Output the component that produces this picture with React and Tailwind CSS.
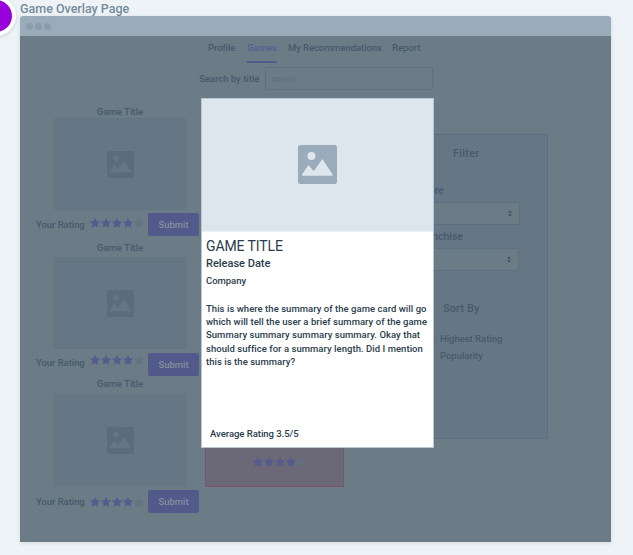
function PictureIcon({ className, hole }) {
  return (
    <svg viewBox="0 0 39 39" className={className}>
      <rect width="39" height="39" rx="2.5" fill="currentColor" />
      <g fill={hole}>
        <circle cx="13.4" cy="11" r="4" />
        <path d="M4 30.8V29.5L10.5 20L15.7 26.2L24.4 14L34.6 29.5V30.8Z" />
      </g>
    </svg>
  );
}

function Star({ className }) {
  return (
    <svg viewBox="0 0 20 20" className={`h-2.5 w-2.5 ${className}`}>
      <path
        fill="currentColor"
        stroke="currentColor"
        strokeWidth="1"
        strokeLinejoin="round"
        d="M10 1L12.8 6.8L19.2 7.6L14.5 12L15.7 18.6L10 15.4L4.3 18.6L5.5 12L.8 7.6L7.2 6.8Z"
      />
    </svg>
  );
}

function Stars({ last = "text-[#637482]" }) {
  return (
    <div className="flex gap-px">
      {[1, 2, 3, 4].map((n) => (
        <Star key={n} className="text-[#555b8f]" />
      ))}
      <Star className={last} />
    </div>
  );
}

function GameItem({ className, picture, row, label, stars }) {
  return (
    <div className={className}>
      <div className="h-3 pl-[61px] text-[9.5px] leading-3 tracking-[0px]">Game Title</div>
      <div className={`ml-[18px] flex h-[92px] w-[132px] items-center justify-center border border-[#657682] bg-[#657785] ${picture}`}>
        <PictureIcon className="h-[27px] w-[27px] text-[#5b6d7b]" hole="#657785" />
      </div>
      <div className={`flex h-[23px] items-center ${row}`}>
        <span className={`w-[54px] shrink-0 whitespace-nowrap text-[9.5px] leading-3 tracking-[-0.05px] ${label}`}>Your Rating</span>
        <div className={stars}>
          <Stars />
        </div>
        <button className="ml-1 h-[23px] w-[51px] shrink-0 rounded-[2px] bg-[#53598b] text-[9.5px] leading-3 tracking-[0px] text-[#84909d]">
          Submit
        </button>
      </div>
    </div>
  );
}

function SelectBox({ className }) {
  return (
    <div className={`flex h-[23px] items-center justify-end rounded-[1px] border border-[#5d7080] bg-[#6b7c87] pr-[7px] ${className}`}>
      <svg viewBox="0 0 4 7" className="h-[7px] w-1 text-[#3f5263]">
        <path fill="currentColor" d="M2 .3L3.8 2.7H.2ZM2 6.7L.2 4.3H3.8Z" />
      </svg>
    </div>
  );
}

function FilterPanel() {
  return (
    <aside className="ml-[199px] mt-[30px] h-[305px] w-[143px] border border-[#5b6e7e] bg-[#657785] pl-2">
      <div className="mt-[13px] pl-[39px] text-[11px] leading-3 tracking-[0.2px]">Filter</div>
      <div className="mt-[25px] flex w-[30px] justify-end text-[10.5px] leading-3 tracking-[0px]">Genre</div>
      <SelectBox className="mt-[5px] w-[106px]" />
      <div className="mt-[6px] flex w-[49px] justify-end text-[10.5px] leading-3 tracking-[0px]">Franchise</div>
      <SelectBox className="mt-[5px] w-[105px]" />
      <div className="mt-8 pl-[29px] text-[11px] leading-3 tracking-[0.1px]">Sort By</div>
      <label className="mt-[18px] flex items-center gap-1 pl-3 text-[9.5px] leading-3 tracking-[-0.03px]">
        <i className="h-2.5 w-2.5 shrink-0 rounded-full border border-[#5f7181]" />
        <span className="whitespace-nowrap">Highest Rating</span>
      </label>
      <label className="mt-[5px] flex items-center gap-1 pl-3 text-[9.5px] leading-3 tracking-[-0.03px]">
        <i className="h-2.5 w-2.5 shrink-0 rounded-full border border-[#5f7181]" />
        <span>Popularity</span>
      </label>
    </aside>
  );
}

function GameModal() {
  return (
    <section className="absolute left-[181px] top-[62px] h-[350px] w-[233px] border border-[#b9c7d2] bg-white text-[#2a3d4c]">
      <div className="flex h-[133px] items-center justify-center border-b border-[#eef2f6] bg-[#dee6ed] pb-px">
        <PictureIcon className="h-[39px] w-[39px] text-[#9aabb9]" hole="#dee6ed" />
      </div>
      <div className="whitespace-nowrap pl-1">
        <h1 className="mt-[6px] text-[14px] font-normal leading-4 tracking-[-0.1px]">GAME TITLE</h1>
        <h2 className="mt-1 text-[11px] leading-3 tracking-[0px]">Release Date</h2>
        <h3 className="mt-[5px] text-[9.5px] leading-3 tracking-[-0.03px]">Company</h3>
        <p className="mt-[15px] text-[9.5px] leading-[13.2px] tracking-[0.04px]">
          This is where the summary of the game card will go<br />
          which will tell the user a brief summary of the game<br />
          Summary summary summary summary. Okay that<br />
          should suffice for a summary length. Did I mention<br />
          this is the summary?
        </p>
        <p className="mt-[60px] pl-1 text-[9.5px] leading-3 tracking-[-0.03px]">Average Rating 3.5/5</p>
      </div>
    </section>
  );
}

export default function App() {
  return (
    <main className="relative h-[555px] w-[633px] overflow-hidden bg-[#edf3f6] pl-5 pt-px font-['Roboto','Liberation_Sans',sans-serif] font-medium">
      <div className="absolute -left-6 -top-1 h-10 w-10 rounded-full border-4 border-white bg-[#9800dc] shadow-[0_1px_3px_rgba(60,80,100,0.25)]" />
      <div className="h-[15px] text-[12.5px] leading-[15px] tracking-[0px] text-[#768b9c]">Game Overlay Page</div>
      <div className="relative h-[526px] w-[591px] rounded-t-[3px] shadow-[0_1px_4px_rgba(60,80,100,0.15)]">
        <div className="flex h-5 items-center gap-[2px] rounded-t-[3px] bg-[#9aabb9] pl-[6px]">
          <i className="h-[7px] w-[7px] rounded-full bg-[#8b9eac]" />
          <i className="h-[7px] w-[7px] rounded-full bg-[#8b9eac]" />
          <i className="h-[7px] w-[7px] rounded-full bg-[#8b9eac]" />
        </div>
        <div className="relative h-[506px] bg-[#6b7c87] text-[#465a6b]">
          <nav className="flex h-[27px] whitespace-nowrap pl-[188px] pt-[6px] text-[9.5px] leading-3 tracking-[-0.05px]">
            <span className="w-[39px]">Profile</span>
            <span className="mr-[11px] h-[21px] w-[30px] border-b-2 border-[#53598b] text-center text-[#575d92]">Games</span>
            <span className="w-[104px] tracking-[-0.08px]">My Recommendations</span>
            <span>Report</span>
          </nav>
          <div className="flex h-[31px] items-center pl-[179px]">
            <span className="w-[66px] whitespace-nowrap text-[9.5px] leading-3 tracking-[0px]">Search by title</span>
            <div className="flex h-[23px] w-[168px] items-center rounded-[1px] border border-[#5f717f] pl-[6px] text-[9.5px] leading-3 tracking-[0px] text-[#5f7180]">mario</div>
          </div>
          <div className="flex h-[448px] items-start pt-[10px]">
            <div className="w-[165px] shrink-0 pl-4">
              <GameItem className="mt-0.5" picture="mt-0" row="mt-[3px]" label="" stars="mb-[3px]" />
              <GameItem className="mt-[6px]" picture="mt-[3px]" row="mt-1" label="mb-[3px]" stars="mb-[9px]" />
              <GameItem className="mt-[2px]" picture="mt-[4px]" row="mt-[4px]" label="" stars="" />
            </div>
            <div className="ml-5 mt-[343px] flex h-[40px] w-[139px] shrink-0 justify-center border border-t-0 border-[#7a536f] bg-[#6b6978] pl-[11px] pt-[10px]">
              <Stars last="text-[#637080]" />
            </div>
            <div className="-ml-[138px] shrink-0">
              <FilterPanel />
            </div>
          </div>
          <GameModal />
        </div>
      </div>
    </main>
  );
}
